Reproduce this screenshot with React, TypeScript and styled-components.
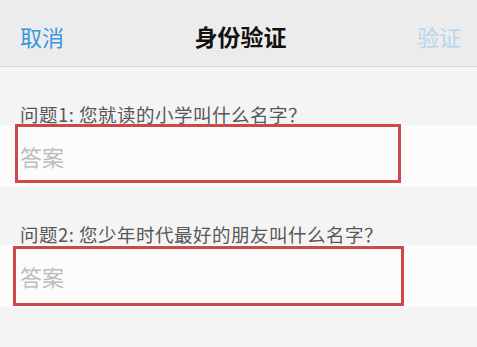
import React from "react";
import styled, { createGlobalStyle } from "styled-components";

const GlobalStyle = createGlobalStyle`
  html, body {
    margin: 0;
    padding: 0;
    background: #f4f4f4;
    font-family: "Noto Sans CJK SC", "Noto Sans", sans-serif;
  }
`;

type Mark = { left: number; top: number; width: number; height: number };

type Question = {
  label: string;
  mark: Mark;
};

const questions: Question[] = [
  { label: "问题1: 您就读的小学叫什么名字？", mark: { left: 15, top: -1, width: 386, height: 59 } },
  { label: "问题2: 您少年时代最好的朋友叫什么名字？", mark: { left: 13, top: 1, width: 391, height: 60 } },
];

function App() {
  return (
    <Page>
      <GlobalStyle />
      <NavBar>
        <NavButton>取消</NavButton>
        <NavTitle>身份验证</NavTitle>
        <NavButton $disabled>验证</NavButton>
      </NavBar>
      {questions.map((q) => (
        <Section key={q.label}>
          <QuestionLabel>{q.label}</QuestionLabel>
          <AnswerRow>
            <AnswerInput placeholder="答案" />
            <Highlight $mark={q.mark} />
          </AnswerRow>
        </Section>
      ))}
    </Page>
  );
}

const Page = styled.div`
  width: 477px;
  height: 347px;
  background: #f4f4f4;
  overflow: hidden;
`;

const NavBar = styled.div`
  height: 67px;
  box-sizing: border-box;
  padding: 6px 16px 0 20px;
  display: flex;
  align-items: center;
  justify-content: space-between;
  background: #ececec;
  border-bottom: 1px solid #d8d8d8;
`;

const NavButton = styled.span<{ $disabled?: boolean }>`
  font-size: 22px;
  line-height: 30px;
  color: ${(p) => (p.$disabled ? "#b6d5ee" : "#3b97dc")};
`;

const NavTitle = styled.span`
  font-size: 23px;
  line-height: 30px;
  font-weight: 700;
  color: #111;
`;

const Section = styled.div`
  padding-top: 36px;
`;

const QuestionLabel = styled.div`
  padding-left: 20px;
  font-size: 18.5px;
  line-height: 22px;
  letter-spacing: 0.5px;
  color: #575757;
`;

const AnswerRow = styled.div`
  position: relative;
  height: 62px;
  background: #fbfbfb;
  display: flex;
  align-items: center;
  padding-left: 20px;
`;

const AnswerInput = styled.input`
  border: none;
  outline: none;
  background: transparent;
  padding: 0;
  font-family: inherit;
  font-size: 22px;
  color: #333;
  width: 360px;
  &::placeholder {
    color: #bdbdbd;
  }
`;

const Highlight = styled.div<{ $mark: Mark }>`
  position: absolute;
  left: ${(p) => p.$mark.left}px;
  top: ${(p) => p.$mark.top}px;
  width: ${(p) => p.$mark.width}px;
  height: ${(p) => p.$mark.height}px;
  box-sizing: border-box;
  border: 3px solid #cd4848;
  pointer-events: none;
`;

export default App;
